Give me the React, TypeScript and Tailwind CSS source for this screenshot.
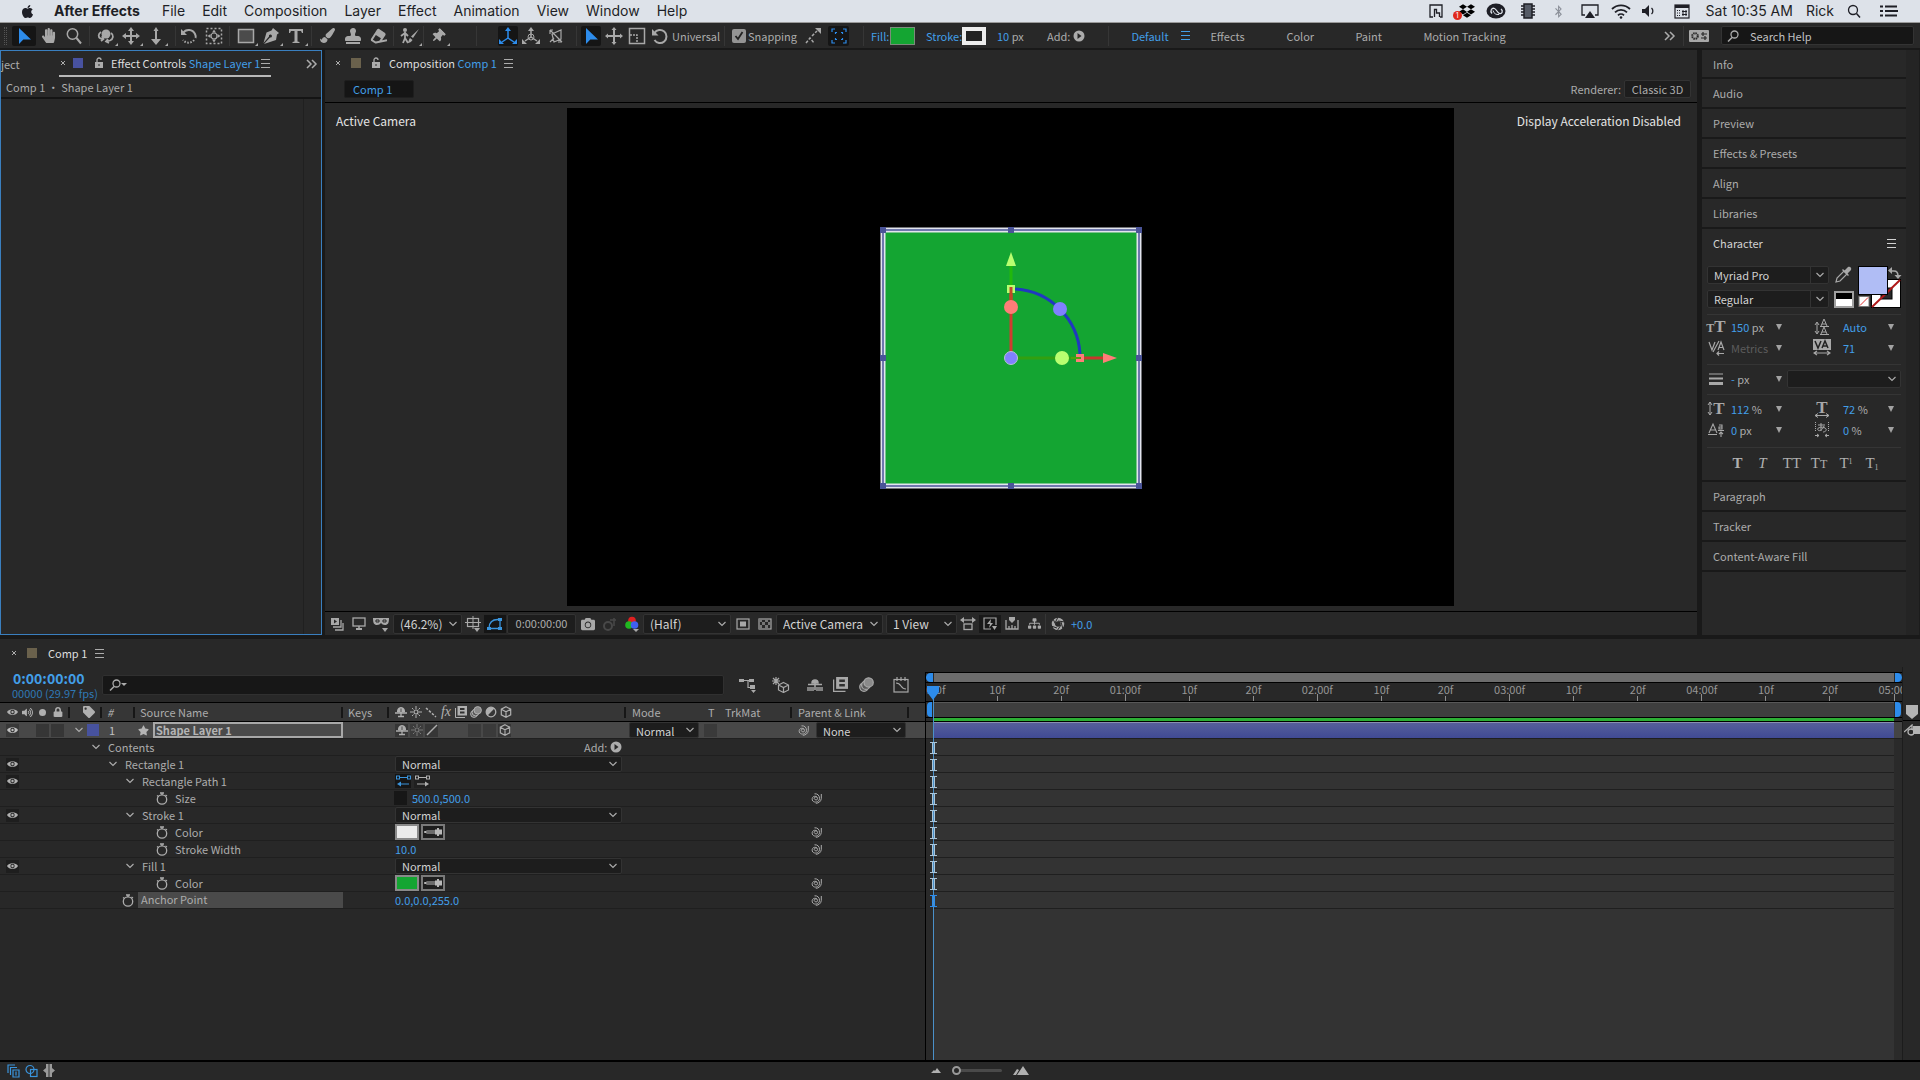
import { useState } from "react";
import type { ReactNode } from "react";
import {
  FaApple, FaBluetoothB, FaCamera, FaDropbox, FaEraser, FaHandPaper, FaLock, FaPaintBrush,
  FaSitemap, FaStamp, FaStar, FaTag, FaThumbtack, FaVolumeUp,
} from "react-icons/fa";

/* ---------- drawing helpers ---------- */

type IcProps = { w?: number; h?: number; className?: string; children: ReactNode };

function Ic({ w = 18, h = 18, className = "", children }: IcProps) {
  return (
    <svg width={w} height={h} viewBox={`0 0 ${w} ${h}`} className={`shrink-0 ${className}`} fill="none" stroke="currentColor" strokeWidth="1.5" aria-hidden="true">
      {children}
    </svg>
  );
}

const F = { fill: "currentColor", stroke: "none" } as const;

const Arrow = () => <Ic><path {...F} d="M4 1v16l4.300-4.500H16z" /></Ic>;
const Zoom = () => <Ic><circle cx="7.500" cy="7" r="5.200" /><path d="M11.500 11l4.500 5.500" strokeWidth="2" /></Ic>;
const Orbit = () => (
  <Ic><circle cx="9" cy="7" r="4.500" {...F} /><path d="M4 5C1 7 1 10 3.500 11.500L6 12M4 14l2.500-2L5 9M14 6c3 2 2.500 6-1 7.500l-4 1M12 16l-3-1.500 2-2.500" strokeWidth="1.800" /></Ic>
);
const PanCross = () => (
  <Ic><path d="M9 3v12M3 9h12" strokeWidth="2" /><path {...F} d="M9 0l3 4H6zM9 18l3-4H6zM0 9l4-3v6zM18 9l-4-3v6z" /></Ic>
);
const Dolly = () => <Ic><path d="M9 4v9" strokeWidth="2" /><path {...F} d="M9 0l2.500 4h-5zM9 18l5-6H4z" /></Ic>;
const Rotate = () => <Ic><path d="M3 6a7 7 0 0 1 12 1c1 2 1 3 .500 4" strokeWidth="2" /><path d="M14 13a7 7 0 0 1-11 0" strokeWidth="2" strokeDasharray="1.500 1.500" /><path {...F} d="M1 2v6h6z" /></Ic>;
const RotateSolid = () => <Ic><path d="M3.500 6a6.500 6.500 0 1 1 0 7" strokeWidth="2" /><path {...F} d="M1 2v6.500h6.500z" /></Ic>;
const AnchorTool = () => (
  <Ic><rect x="1.500" y="1.500" width="15" height="15" strokeDasharray="2 2" /><circle cx="9" cy="9" r="3" strokeWidth="1.200" /><path {...F} d="M9 2.500l2 3H7zM9 15.500l2-3H7zM2.500 9l3-2v4zM15.500 9l-3-2v4z" /></Ic>
);
const RectTool = () => <Ic><rect x="1.500" y="2.500" width="15" height="13" fill="#4b4b4b" /></Ic>;
const Pen = () => <Ic><path {...F} d="M11 1l6 5-2 1.500-1 5.500L2 17l6-6.500a1.500 1.500 0 1 0-1-1L1.500 16 4.500 5.500 9.500 3.500z" /></Ic>;
const TypeTool = () => <Ic><path {...F} d="M2 2h14v4h-1l-1-2h-3.500v10.500l2 .5v1h-7v-1l2-.5V4H4L3 6H2z" /></Ic>;
const Roto = () => (
  <Ic w={20}><circle cx="5" cy="3" r="2" {...F} /><path d="M5 5v6l-2 5M5 11l3 5M1 9l4-3 3 3" strokeWidth="1.800" /><path {...F} d="M19 2l-6 9-2-1.500zM10 11l2.500 2c-1 2-3 3-5 3 1-1 1.500-4 2.500-5z" /></Ic>
);
const AxisLocal = () => <Ic><path d="M9 3v8M9 11l-6 4M9 11l6 4" /><path {...F} d="M9 0l3 4H6zM0 17v-5l5 5zM18 17v-5l-5 5z" /></Ic>;
const AxisWorld = () => <Ic><circle cx="9" cy="10" r="3" strokeWidth="1" /><path d="M9 3v7M9 10l-6 4M9 10l6 4" /><path {...F} d="M9 0l3 4H6zM0 17v-5l5 5zM18 17v-5l-5 5z" /></Ic>;
const AxisView = () => <Ic><path d="M3 3l12 12M5 7l9-4v9l-7 3zM3 3l3 0M3 3v4M15 15h-4M3 15l4-4" strokeWidth="1.200" /></Ic>;
const MovePlus = () => <Ic><path d="M9 2v14M2 9h14" strokeWidth="2" /><path {...F} d="M9 0l2.500 3h-5zM9 18l2.500-3h-5zM0 9l3-2.500v5zM18 9l-3-2.500v5z" /></Ic>;
const ScaleTool = () => <Ic><rect x="1.500" y="1.500" width="15" height="15" /><path d="M2 8h7v8" strokeDasharray="2 1" /></Ic>;
const SnapA = () => <Ic><path d="M2 16l4-5 4 5M8 9l5-5" strokeDasharray="3 1.500" /><path {...F} d="M11 1h6v6z" /></Ic>;
const SnapB = () => <Ic><path d="M2 5V2h3M13 2h3v3M16 13v3h-3M5 16H2v-3M5.500 7V5.500H7M12.500 7V5.500H11M5.500 11v1.500H7M12.500 11v1.500H11" strokeWidth="1.200" /></Ic>;
const PlayCircle = () => <Ic w={12} h={12}><circle cx="6" cy="6" r="5.500" {...F} /><path d="M4.500 3l4 3-4 3z" fill="#282828" stroke="none" /></Ic>;
const Burger = () => <Ic w={10} h={9}><path d="M0 .500h9M0 4.500h9M0 8.500h9" strokeWidth="1" /></Ic>;
const DoubleChevron = () => <Ic w={12} h={10}><path d="M1 1l4 4-4 4M6 1l4 4-4 4" /></Ic>;
const Chevron = ({ className = "" }: { className?: string }) => <Ic w={8} h={6} className={className}><path d="M.5 1L4 4.500 7.500 1" strokeWidth="1.200" /></Ic>;
const Tri = () => <Ic w={6} h={8}><path {...F} d="M0 1h6L3 7z" /></Ic>;
const Cross = () => <Ic w={6} h={6}><path d="M1 1l4 4M5 1L1 5" strokeWidth="1" /></Ic>;
const OpenLock = () => <Ic w={10} h={12}><rect x="1" y="5" width="8" height="6" {...F} /><path d="M3 5V3a2 2 0 0 1 4 0" strokeWidth="1.300" /><rect x="4.500" y="7" width="1" height="2" fill="#282828" stroke="none" /></Ic>;
const Lens = () => <Ic w={12} h={12}><circle cx="7.500" cy="4.500" r="3.500" strokeWidth="1.300" /><path d="M5 7.500l-4 4" strokeWidth="1.500" /></Ic>;
const Eye = () => <Ic w={11} h={8}><path {...F} d="M0 4C2 .200 9 .200 11 4 9 7.800 2 7.800 0 4z" /><circle cx="5.500" cy="4" r="2.200" fill="#2a2a2a" stroke="none" /><circle cx="5.500" cy="4" r="1.200" {...F} /></Ic>;
const Shy = () => <Ic w={12} h={12}><path d="M2.500 6V5a3.500 3.500 0 0 1 7 0v1z" fill="currentColor" strokeWidth="1" /><path d="M0 7h12M6 4v7M3 10.500h6" strokeWidth="1.300" /><path d="M6 2.500v3.500" stroke="#333" strokeWidth=".8" /></Ic>;
const Sun = () => <Ic w={12} h={12}><circle cx="6" cy="6" r="2" strokeWidth="1.200" /><path d="M6 0v3M6 9v3M0 6h3M9 6h3M2 2l1.500 1.500M8.500 8.500L10 10M10 2L8.500 3.500M3.500 8.500L2 10" strokeWidth="1" /></Ic>;
const QualityDots = () => <Ic w={12} h={12}><path d="M1 2l10 9" strokeDasharray="2.500 1.500" /></Ic>;
const Slash = () => <Ic w={12} h={12}><path d="M1 11L11 1" /></Ic>;
const Film = ({ s = 12, className = "" }: { s?: number; className?: string }) => (
  <svg width={s} height={s} viewBox="0 0 12 12" className={`shrink-0 ${className}`} aria-hidden="true" fill="currentColor"><path d="M2.500 0H12v9.500H2.500z" /><path d="M.5 2v9.500H10" fill="none" stroke="currentColor" /><path d="M5 2h4.500v2H5zM5 5.500h4.500v2H5z" fill="#303030" /></svg>
);
const Blur = ({ s = 12, className = "" }: { s?: number; className?: string }) => (
  <svg width={s} height={s} viewBox="0 0 12 12" className={`shrink-0 ${className}`} aria-hidden="true" fill="#5a5a5a" stroke="currentColor"><circle cx="4" cy="8" r="3.400" /><circle cx="5.500" cy="6.500" r="3.400" /><circle cx="7.700" cy="4.300" r="3.700" fill="#8a8a8a" /></svg>
);
const Adjust = () => <Ic w={12} h={12}><circle cx="6" cy="6" r="4.800" strokeWidth="1.300" /><path {...F} d="M9.400 2.600A4.800 4.800 0 0 0 2.600 9.400z" /></Ic>;
const Cube = () => <Ic w={12} h={12}><path d="M6 .700l4.700 2.500v5.600L6 11.300 1.300 8.800V3.200zM1.300 3.200L6 5.800l4.700-2.600M6 5.800v5.500" strokeWidth="1.200" /></Ic>;
const Whip = () => <Ic w={12} h={12}><path d="M7.300 5.500a1.600 1.600 0 1 0 .2 1.200c.300-2.500-4.500-3.800-5.300-.200-.800 4.500 6.800 5 7.300.200C9.700 3.500 7.500 1.500 4.500 1.800M11.300 2v4.500c-.300 3-2.800 4.800-5.500 4.800" strokeWidth="1" /></Ic>;
const Stopwatch = () => <Ic w={12} h={13}><circle cx="6" cy="7.500" r="4.700" strokeWidth="1.300" /><path d="M4 1h4M6 1v2M9.500 3l1.500 1M1 3.500l1.500 1" strokeWidth="1.300" /></Ic>;
const Beam = () => <Ic w={7} h={12}><path d="M0 .500h7M0 11.500h7M2.500 1v10M4.500 1v10" strokeWidth="1" /></Ic>;

/* ---------- controls ---------- */

function Drop({ label, value, className, split = false }: { label: string; value: string; className: string; split?: boolean }) {
  return (
    <div className={`relative shrink-0 ${className}`}>
      <select aria-label={label} defaultValue={value} className="block h-full w-full appearance-none rounded-[2px] border border-[#333] bg-[#1d1d1d] pl-[6px] text-[#d2d2d2] outline-none">
        <option value={value}>{value}</option>
      </select>
      <span className={`pointer-events-none absolute inset-y-0 right-0 flex items-center pl-[5px] pr-[5px] text-[#aaa] ${split ? "border-l border-[#333]" : ""}`}><Chevron /></span>
    </div>
  );
}

function Tool({ label, active = false, more = false, className = "w-[25px]", children }: { label: string; active?: boolean; more?: boolean; className?: string; children: ReactNode }) {
  return (
    <button aria-label={label} className={`relative flex h-[20px] shrink-0 items-center justify-center ${active ? "rounded-[2px] bg-[#151515] text-[#2d8ceb]" : "text-[#a8a8a8]"} ${className}`}>
      {children}
      {more && <Ic w={3} h={3} className="absolute bottom-0 right-0"><path {...F} d="M3 0v3H0z" /></Ic>}
    </button>
  );
}

const Sep = ({ className = "" }: { className?: string }) => <span className={`h-[20px] w-px shrink-0 bg-[#363636] ${className}`} />;

/* ---------- system menu bar ---------- */

function MenuBar() {
  return (
    <header className="flex h-[23px] shrink-0 items-center border-b border-[#9a9a9a] bg-[#dde2e9] pl-[20px] pr-[22px] font-['Inter',sans-serif] text-[14px] text-[#1e1f26]">
      <FaApple size={15} className="mr-[19px]" />
      <nav className="flex items-center gap-[17px]">
        <button className="mr-[5px] font-bold">After Effects</button>
        {["File", "Edit", "Composition", "Layer", "Effect", "Animation", "View", "Window", "Help"].map((m) => <button key={m}>{m}</button>)}
      </nav>
      <div className="ml-auto flex items-center">
        <Ic w={14} h={14} className="mr-[16px]"><path d="M4 13H1V1h12v12h-2M5.500 13V5.500h2V9h3v4" strokeWidth="1.300" /></Ic>
        <span className="relative mr-[11px]"><FaDropbox size={16} className="text-black" /><span className="absolute -left-1.5 top-2 flex h-[9px] w-[9px] items-center justify-center rounded-full bg-[#e0281c] text-[7px] text-white">1</span></span>
        <Ic w={20} h={16} className="mr-[15px]"><ellipse cx="10" cy="8" rx="9.500" ry="7.500" {...F} /><path d="M6 10.500c-2.500-3 0-6 2.500-5 2 .800 3 4.500 5 5 2.500.500 4-2.500 1.500-4.500" stroke="#dde2e9" strokeWidth="1.300" /><path d="M7 7.500c.500 3 3.500 4.500 6 4" stroke="#dde2e9" strokeWidth="1" /></Ic>
        <Ic w={14} h={16} className="mr-[17px]"><rect x="3" y="1" width="8" height="14" fill="#555b66" /><path d="M0 3h3M0 6h3M0 9h3M0 12h3M11 3h3M11 6h3M11 9h3M11 12h3" /></Ic>
        <FaBluetoothB size={13} className="mr-[16px] text-[#8a8f98]" />
        <Ic w={18} h={15} className="mr-[12px]"><path d="M4 11H1V1h16v10h-3" strokeWidth="1.300" /><path {...F} d="M9 7l5 7H4z" /></Ic>
        <Ic w={20} h={15} className="mr-[10px]"><path d="M1 5a13 13 0 0 1 18 0M4 8.300a8.500 8.500 0 0 1 12 0M7 11.300a4.300 4.300 0 0 1 6 0" strokeWidth="1.800" /><circle cx="10" cy="13.500" r="1.300" {...F} /></Ic>
        <Ic w={14} h={14} className="mr-[19px]"><path {...F} d="M1 5h3l4-4v12L4 9H1z" /><path d="M10.500 4a4 4 0 0 1 0 6" strokeWidth="1.300" /></Ic>
        <Ic w={16} h={15} className="mr-[16px]"><rect x="1" y="1" width="14" height="13" strokeWidth="1.200" /><path {...F} d="M1 1h14v3H1z" /><path d="M3 6.500h3M3 9h3M3 11.500h3" strokeWidth="1" strokeDasharray="1 1" /><path d="M9 6v6M12 6v6M8 7.500h5M8 10.500h5" strokeWidth="1" /></Ic>
        <span className="mr-[13px]">Sat 10:35 AM</span>
        <span className="mr-[13px]">Rick</span>
        <Ic w={14} h={14} className="mr-[19px]"><circle cx="6" cy="6" r="4.500" strokeWidth="1.300" /><path d="M9.500 9.500L13 13.500" strokeWidth="1.500" /></Ic>
        <Ic w={18} h={12}><path d="M5 1.500h12M5 6h13M5 10.500h12M0 1.500h3M0 6h3M0 10.500h3" strokeWidth="2" /></Ic>
      </div>
    </header>
  );
}

/* ---------- tool bar ---------- */

function ToolBar() {
  const [snap, setSnap] = useState(true);
  return (
    <div className="flex h-[27px] shrink-0 items-center border-b-2 border-[#191919] bg-[#282828] pl-[4px] pr-[6px] text-[#acacac]">
      <span className="mr-[5px] h-[18px] w-[3px] shrink-0 border-x border-dotted border-[#555]" />
      <Tool label="Selection" active className="w-[24px]"><Arrow /></Tool>
      <Tool label="Hand"><FaHandPaper size={15} /></Tool>
      <Tool label="Zoom"><Zoom /></Tool>
      <Sep className="ml-[3px] mr-[3px]" />
      <Tool label="Orbit" more><Orbit /></Tool>
      <Tool label="Pan" more><PanCross /></Tool>
      <Tool label="Dolly" more><Dolly /></Tool>
      <Sep className="ml-[7px]" />
      <Tool label="Rotate"><Rotate /></Tool>
      <Tool label="Anchor"><AnchorTool /></Tool>
      <Sep className="ml-[3px] mr-[3px]" />
      <Tool label="Rectangle" more><RectTool /></Tool>
      <Tool label="Pen" more><Pen /></Tool>
      <Tool label="Type" more><TypeTool /></Tool>
      <Sep className="ml-[3px] mr-[3px]" />
      <Tool label="Brush"><FaPaintBrush size={15} /></Tool>
      <Tool label="Clone stamp"><FaStamp size={16} /></Tool>
      <Tool label="Eraser"><FaEraser size={16} className="-rotate-12" /></Tool>
      <Sep className="ml-[3px] mr-[3px]" />
      <Tool label="Roto brush" more><Roto /></Tool>
      <Sep className="ml-px mr-px" />
      <Tool label="Puppet pin" more><FaThumbtack size={14} className="rotate-45" /></Tool>
      <Sep className="ml-[26px] mr-[21px]" />
      <Tool label="Local axis" active className="w-[20px]"><AxisLocal /></Tool>
      <Tool label="World axis"><AxisWorld /></Tool>
      <Tool label="View axis"><AxisView /></Tool>
      <Sep className="ml-[8px] mr-[4px]" />
      <Tool label="Select gizmo" active className="w-[20px]"><Arrow /></Tool>
      <Tool label="Position gizmo"><MovePlus /></Tool>
      <Tool label="Scale gizmo" className="w-[22px]"><ScaleTool /></Tool>
      <Tool label="Rotation gizmo" className="w-[24px]"><RotateSolid /></Tool>
      <span className="w-[52px] shrink-0">Universal</span>
      <Sep className="mr-[7px]" />
      <label className="flex w-[70px] shrink-0 items-center gap-[2px]">
        <input type="checkbox" checked={snap} onChange={(e) => setSnap(e.target.checked)} className="peer sr-only" />
        <span className="flex h-[14px] w-[14px] shrink-0 items-center justify-center rounded-[2px] bg-[#949494]"><Ic w={10} h={10}>{snap && <path d="M1.500 5L4 8l4.500-7" stroke="#222" strokeWidth="1.800" />}</Ic></span>
        Snapping
      </label>
      <Tool label="Snap edges" className="w-[22px]"><SnapA /></Tool>
      <Tool label="Snap features" active className="ml-[4px] w-[21px]"><SnapB /></Tool>
      <Sep className="ml-[14px] mr-[7px]" />
      <button className="w-[19px] shrink-0 text-left text-[#429fe8]">Fill:</button>
      <button aria-label="Fill colour" className="mr-[11px] h-[18px] w-[25px] shrink-0 border border-[#7b8b7b] bg-[#14a532]" />
      <button className="w-[36px] shrink-0 text-left text-[#429fe8]">Stroke:</button>
      <button aria-label="Stroke colour" className="mr-[11px] h-[18px] w-[24px] shrink-0 border-4 border-[#ececec] bg-[#222]" />
      <span className="mr-[20px] w-[30px] shrink-0"><span className="text-[#429fe8]">10</span> px</span>
      <button className="flex shrink-0 items-center gap-[3px]">Add: <PlayCircle /></button>
      <Sep className="ml-[23px]" />
      <nav className="ml-[22px] flex shrink-0 items-center">
        <button className="flex w-[79px] items-center gap-[12px] text-[#429fe8]">Default <Burger /></button>
        <button className="w-[76px] text-left">Effects</button>
        <button className="w-[69px] text-left">Color</button>
        <button className="w-[68px] text-left">Paint</button>
        <button>Motion Tracking</button>
      </nav>
      <button aria-label="More workspaces" className="ml-auto shrink-0"><DoubleChevron /></button>
      <Sep className="ml-[7px] mr-[5px]" />
      <button aria-label="Workspace settings" className="mr-[12px] shrink-0 text-[#a8a8a8]">
        <Ic w={20} h={12}><rect width="20" height="12" rx="1" {...F} /><circle cx="6" cy="6" r="2.800" stroke="#282828" strokeDasharray="1.500 .700" strokeWidth="2" /><path d="M12 4h6M12 8h6M14 2v4M16 6v4" stroke="#282828" strokeWidth="1.200" /></Ic>
      </button>
      <label className="flex h-[19px] w-[193px] shrink-0 items-center gap-[11px] rounded-[2px] border border-[#333] bg-[#161616] pl-[5px]">
        <Lens />
        <input aria-label="Search Help" placeholder="Search Help" className="w-[140px] bg-transparent outline-none placeholder:text-[#c0c0c0]" />
      </label>
    </div>
  );
}

/* ---------- effect controls ---------- */

function EffectControls() {
  return (
    <section className="flex w-[322px] shrink-0 flex-col border border-[#3a7fbf] bg-[#282828] text-[#acacac]">
      <div className="flex h-[26px] items-center pr-[3px]">
        <button className="w-[58px] shrink-0 text-left">ject</button>
        <div className="flex h-full w-[212px] shrink-0 items-center border-b-2 border-[#b8b8b8] pl-px">
          <Cross />
          <span className="ml-[7px] mr-[11px] h-[10px] w-[10px] shrink-0 bg-[#4852a0]" />
          <OpenLock />
          <span className="ml-[7px] flex-1 whitespace-nowrap text-[#dedede]">Effect Controls <span className="text-[#429fe8]">Shape Layer 1</span></span>
          <Burger />
        </div>
        <button aria-label="More panels" className="ml-auto"><DoubleChevron /></button>
      </div>
      <div className="h-[22px] border-b-2 border-[#141414] pl-[5px] leading-[21px]">Comp 1 • Shape Layer 1</div>
      <div className="mr-[17px] flex-1 border-r border-[#202020]" />
    </section>
  );
}

/* ---------- composition viewer ---------- */

const handles: [number, number][] = [[316, 122], [444, 122], [572, 122], [316, 250], [572, 250], [316, 378], [444, 378], [572, 378]];

function Stage() {
  return (
    <svg width="887" height="498" viewBox="0 0 887 498" className="shrink-0 bg-black" role="img" aria-label="Composition canvas">
      <rect x="316" y="122" width="256" height="256" fill="#14a532" stroke="#e2e4ee" strokeWidth="5" />
      <rect x="316" y="122" width="256" height="256" fill="none" stroke="#4a5498" strokeWidth="1.500" />
      {handles.map(([x, y]) => <rect key={`${x}-${y}`} x={x - 3} y={y - 3} width="6" height="6" fill="#4a5498" />)}
      <path d="M444 158v20" stroke="#22b80c" strokeWidth="3" />
      <path d="M444 144l5 14h-10z" fill="#b8ff70" />
      <path d="M448 181a69 69 0 0 1 65 65" fill="none" stroke="#2038c0" strokeWidth="3" />
      <path d="M444 248V186" stroke="#d03c30" strokeWidth="3" />
      <rect x="441.500" y="178.500" width="5" height="5" fill="none" stroke="#b8ff70" strokeWidth="3" />
      <path d="M444 179v13" stroke="#c04828" strokeWidth="3" />
      <circle cx="444" cy="199" r="7" fill="#ff7d78" />
      <circle cx="493" cy="201" r="7" fill="#8080ff" />
      <path d="M446 250h68" stroke="#32a010" strokeWidth="3" />
      <path d="M517 250h20" stroke="#c8382c" strokeWidth="3" />
      <path d="M536 245l14 5-14 5z" fill="#ff7d78" />
      <rect x="510.500" y="247.500" width="5" height="5" fill="none" stroke="#ff7d78" strokeWidth="3" />
      <path d="M504 250h10" stroke="#50a010" strokeWidth="2" />
      <circle cx="495" cy="250" r="7" fill="#b8ff70" />
      <circle cx="444" cy="250" r="6.500" fill="#8080ff" stroke="#b8c0d8" />
    </svg>
  );
}

function FootIcon({ label, tone = "text-[#a8a8a8]", children }: { label: string; tone?: string; children: ReactNode }) {
  return <button aria-label={label} className={`flex h-[18px] w-[22px] shrink-0 items-center justify-center ${tone}`}>{children}</button>;
}

function Composition() {
  return (
    <section className="flex min-w-0 flex-1 flex-col bg-[#282828] text-[#acacac]">
      <div className="flex h-[26px] items-center pl-[10px]">
        <Cross />
        <span className="ml-[10px] mr-[10px] h-[10px] w-[10px] bg-[#6a614c]" />
        <OpenLock />
        <span className="ml-[8px] mr-[7px] text-[#dedede]">Composition <span className="text-[#429fe8]">Comp 1</span></span>
        <Burger />
      </div>
      <div className="flex h-[27px] items-start justify-between border-b border-black pl-[19px] pr-[6px] pt-[4px]">
        <button className="h-[18px] w-[70px] rounded-[2px] border border-[#1e1e1e] bg-[#151515] pl-[8px] text-left leading-[15px] text-[#429fe8]">Comp 1</button>
        <div className="flex items-center gap-[3px]">Renderer: <button className="h-[18px] w-[67px] rounded-[2px] border border-[#333] bg-[#1d1d1d] leading-[15px]">Classic 3D</button></div>
      </div>
      <div className="relative flex justify-center py-[5px] pr-px text-[12px]">
        <span className="absolute left-[11px] top-[10px] text-[#e4e4e4]">Active Camera</span>
        <span className="absolute right-[16px] top-[10px] text-[#e4e4e4]">Display Acceleration Disabled</span>
        <Stage />
      </div>
      <div className="flex h-[24px] items-center border-t border-black pl-px text-[12px]">
        <FootIcon label="Always preview"><Ic w={14} h={14}><rect x="1" y="1" width="8" height="7" {...F} /><path d="M3 10h8V3M5 13h8V6" strokeWidth="1.300" /><path d="M4 2.500l3 2-3 2z" fill="#282828" stroke="none" /></Ic></FootIcon>
        <FootIcon label="Primary viewer"><Ic w={14} h={14}><rect x="1" y="1" width="12" height="8" strokeWidth="1.300" /><path d="M4 12h6" strokeWidth="2" /><path d="M7 9v3" /></Ic></FootIcon>
        <FootIcon label="Mask visibility"><Ic w={16} h={16}><path {...F} d="M0 2h16c0 5-1 7-4 7-2 0-3-1-4-2-1 1-2 2-4 2C1 9 0 7 0 2z" /><path d="M3 4h3v2H3zM10 4h3v2h-3z" stroke="#282828" strokeWidth="1" /><path {...F} d="M9 12h6l-3 4z" /></Ic></FootIcon>
        <Drop label="Magnification" value="(46.2%)" className="ml-px h-[20px] w-[69px]" />
        <FootIcon label="Grid and guides"><Ic w={16} h={16}><rect x="2.500" y="2.500" width="11" height="8" strokeWidth="1.200" /><path d="M8 0v13M0 6.500h16" strokeWidth="1" /><path {...F} d="M9 12h6l-3 4z" /></Ic></FootIcon>
        <FootIcon label="Path visibility" tone="bg-[#151515] text-[#3a94dc]"><Ic w={16} h={14}><path d="M2 11.500C2 5 6 2.500 11 2.500h2v9z" strokeWidth="1.300" /><path {...F} d="M0 10h4v3H0zM11 10h4v3h-4zM11 1h4v3h-4z" /></Ic></FootIcon>
        <button className="mx-px h-[20px] w-[69px] shrink-0 rounded-[2px] border border-[#333] bg-[#1d1d1d] text-[11px] leading-[17px]">0:00:00:00</button>
        <FootIcon label="Snapshot"><FaCamera size={14} /></FootIcon>
        <FootIcon label="Show snapshot" tone="text-[#484848]"><Ic w={16} h={14}><circle cx="6" cy="9" r="4" strokeWidth="2" /><path d="M8 3h6M12 1v8" strokeWidth="1.500" /></Ic></FootIcon>
        <FootIcon label="Channels"><Ic w={14} h={16}><circle cx="7" cy="4.500" r="3.800" fill="#e02020" stroke="none" /><circle cx="4" cy="9" r="3.800" fill="#20b820" stroke="none" /><circle cx="9.500" cy="9" r="3.800" fill="#4060f0" stroke="none" /><path {...F} d="M8 13h6l-3 3z" /></Ic></FootIcon>
        <Drop label="Resolution" value="(Half)" className="h-[20px] w-[88px]" />
        <span className="w-px shrink-0" />
        <FootIcon label="Region of interest"><Ic w={14} h={12}><rect x="1" y="1" width="12" height="10" strokeWidth="1.200" /><rect x="4" y="3.500" width="6" height="5" {...F} /></Ic></FootIcon>
        <FootIcon label="Transparency grid"><Ic w={14} h={12}><rect x="1" y="1" width="12" height="10" strokeWidth="1.200" /><path fill="#777" stroke="none" d="M1 1h3v3H1zM7 1h3v3H7zM4 4h3v3H4zM10 4h3v3h-3zM1 7h3v4H1zM7 7h3v4H7z" /></Ic></FootIcon>
        <Drop label="3D view" value="Active Camera" className="h-[20px] w-[107px]" />
        <Drop label="View layout" value="1 View" className="ml-[3px] h-[20px] w-[71px]" />
        <FootIcon label="Pixel aspect"><Ic w={16} h={14}><path d="M2 3h12" strokeWidth="1.300" /><path {...F} d="M0 3l4-3v6zM16 3l-4-3v6z" /><rect x="4" y="7" width="8" height="5.500" strokeWidth="1.300" /></Ic></FootIcon>
        <FootIcon label="Fast previews" tone="bg-[#191919] text-[#a8a8a8]"><Ic w={15} h={14}><path d="M8 12H1V1h12v7" strokeWidth="1.200" /><path {...F} d="M8 2L4 7h3l-1 4 4-5H7.500zM9 9h5l-2.500 4z" /></Ic></FootIcon>
        <FootIcon label="Timeline"><Ic w={14} h={14}><path d="M1 3v9h12V3M4 12V9M7 12V8M10 12V9" strokeWidth="1.300" /><path {...F} d="M4 0h6v3L7 6 4 3z" /></Ic></FootIcon>
        <FootIcon label="Flowchart"><FaSitemap size={13} /></FootIcon>
        <Sep className="mr-px" />
        <FootIcon label="Reset exposure"><Ic w={14} h={14}><circle cx="7" cy="7" r="4.500" strokeWidth="3.500" /><path d="M7 0L4 6M14 5L7 4M12 12l-2-7M6 14l4-6M0 9l6 2M2 2l3 6" stroke="#282828" strokeWidth="1" /></Ic></FootIcon>
        <button className="ml-[2px] text-[11px] text-[#429fe8]">+0.0</button>
      </div>
    </section>
  );
}

/* ---------- right dock ---------- */

function DockRow({ title, height }: { title: string; height: "h-[29px]" | "h-[30px]" }) {
  return <button className={`flex items-center border-b-2 border-[#191919] pl-[11px] text-left text-[#acacac] ${height}`}>{title}</button>;
}

function Metric({ icon, value, unit, muted = false, wide = false, name }: { icon: ReactNode; value: string; unit?: string; muted?: boolean; wide?: boolean; name: string }) {
  return (
    <div className="flex h-[21px] items-center">
      <span className="flex w-[18px] shrink-0 justify-center text-[#a8a8a8]">{icon}</span>
      <button aria-label={name} className={`w-[45px] shrink-0 whitespace-nowrap text-left ${wide ? "ml-[12px]" : "ml-[6px]"} ${muted ? "text-[#5c5c5c]" : "text-[#429fe8]"}`}>{value}{unit && <span className="text-[#acacac]"> {unit}</span>}</button>
      <span className="text-[#a2a2a2]"><Tri /></span>
    </div>
  );
}

const Serif = ({ children, className = "" }: { children: ReactNode; className?: string }) => <span className={`font-['Liberation_Serif',serif] leading-none ${className}`}>{children}</span>;

function Character() {
  return (
    <div className="border-b-2 border-[#191919] px-[5px] pb-[9px] text-[#a8a8a8]">
      <div className="flex h-[28px] items-center justify-between pl-[6px] pr-[4px] text-[#d2d2d2]">Character <Burger /></div>
      <div className="mt-[9px] flex h-[42px]">
        <div className="flex flex-col gap-[6px]">
          <Drop split label="Font family" value="Myriad Pro" className="h-[18px] w-[122px]" />
          <Drop split label="Font style" value="Regular" className="h-[18px] w-[122px]" />
        </div>
        <div className="ml-[5px] flex w-[20px] flex-col justify-between">
          <Ic w={18} h={18}><path d="M2 16l1-4 7-7 3 3-7 7z" strokeWidth="1.200" /><path {...F} d="M8 4l6 6 1-1-1.500-1.500L17 4c1-2-1-4-3-3l-3.500 3.500L9 3z" /></Ic>
          <button aria-label="Black or white" className="h-[17px] w-[20px] border-2 border-[#a0a0a0] bg-linear-to-b from-black from-50% to-white to-50%" />
        </div>
        <svg width="44" height="42" viewBox="0 0 44 42" className="ml-[4px] shrink-0" role="img" aria-label="Fill and stroke colours">
          <rect x="13.500" y="13.500" width="29" height="28" fill="#fff" stroke="#000" />
          <rect x="23" y="22" width="11" height="11" fill="#282828" stroke="#000" />
          <path d="M14 41L42 14" stroke="#b01818" strokeWidth="2" />
          <rect x=".5" y=".5" width="29" height="28" fill="#b0bdf5" stroke="#000" />
          <rect x="1" y="30.500" width="10" height="10" fill="#fff" stroke="#777" /><path d="M2 39.500l8-8" stroke="#e03030" />
          <path d="M33 5h3q4 0 4 5" fill="none" stroke="#a8a8a8" strokeWidth="1.500" /><path d="M34 1v7l-4-3.500zM36.500 9h7L40 13z" fill="#a8a8a8" />
        </svg>
      </div>
      <div className="mt-[6px] grid grid-cols-[106px_1fr] border-t border-[#353535] py-px">
        <Metric name="Font size" icon={<Serif className="text-[17px] font-bold"><span className="text-[12px]">T</span>T</Serif>} value="150" unit="px" />
        <Metric wide name="Leading" icon={<Ic w={16} h={17}><path d="M3 5v10M1 7l2-3 2 3M1 13l2 3 2-3M7 8l3-7 3 7M8 6h4M7 16l3-7 3 7M8 14h4M6 8.500h9M6 16.500h9" strokeWidth="1" /></Ic>} value="Auto" />
        <Metric name="Kerning" muted icon={<Ic w={17} h={16}><path d="M1 2l3 8 3-8M5 12L11 1M10 10l3-8 3 8M11 7.500h4M9 13.500h7M11 11.500l-2 2 2 2" strokeWidth="1.200" /></Ic>} value="Metrics" />
        <Metric wide name="Tracking" icon={<Ic w={18} h={17}><rect width="18" height="11" {...F} /><path d="M2 2l3 7 3-7M9 9l3-7 3 7M10 7h4" stroke="#222" strokeWidth="1.500" /><path d="M1 14h16M4 12l-3 2 3 2M14 12l3 2-3 2" strokeWidth="1.200" /></Ic>} value="71" />
      </div>
      <div className="mt-[5px] flex items-center justify-between border-t border-[#353535] pt-[3px]">
        <Metric name="Stroke width" icon={<Ic w={14} h={12}><path d="M0 1h14" strokeWidth="1" /><path d="M0 5.500h14" strokeWidth="2" /><path d="M0 10.500h14" strokeWidth="3" /></Ic>} value="-" unit="px" />
        <Drop label="Stroke style" value="" className="h-[18px] w-[114px]" />
      </div>
      <div className="mt-[5px] grid grid-cols-[106px_1fr] border-t border-[#353535] pb-px pt-[3px]">
        <Metric name="Vertical scale" icon={<span className="flex items-center"><Ic w={6} h={15}><path d="M3 1v13M1 4l2-3 2 3M1 11l2 3 2-3" strokeWidth="1" /></Ic><Serif className="text-[17px] font-bold">T</Serif></span>} value="112" unit="%" />
        <Metric wide name="Horizontal scale" icon={<span className="flex flex-col items-center"><Serif className="text-[17px] font-bold">T</Serif><Ic w={16} h={5} className="-mt-[3px]"><path d="M1 2.500h14M4 .500l-3 2 3 2M12 .500l3 2-3 2" strokeWidth="1" /></Ic></span>} value="72" unit="%" />
        <Metric name="Baseline shift" icon={<Ic w={17} h={15}><path d="M1 11l4-9 4 9M2.500 8h5M0 12.500h9M11 3h3v4h-3V5h3M10 8.500h6M13 10v5M11 12l2-2 2 2" strokeWidth="1.100" /></Ic>} value="0" unit="px" />
        <Metric wide name="Tsume" icon={<Ic w={16} h={16}><path d="M1.500 0v10M14.500 0v10" strokeWidth="1" strokeDasharray="1 1" /><path d="M4 3h7M7 1v8M10 4c-1 3-4 6-6 4s4-4 7-2 0 4-2 4M1 13.500h4M3 12l2 1.500L3 15M15 13.500h-4M13 12l-2 1.500 2 1.500" strokeWidth="1" /></Ic>} value="0" unit="%" />
      </div>
      <div className="mt-[6px] flex h-[24px] items-end border-t border-[#353535] pl-[18px] text-[#b0b0b0]">
        <button className="w-[25px]"><Serif className="text-[15px] font-bold">T</Serif></button>
        <button className="w-[25px]"><Serif className="text-[15px] italic">T</Serif></button>
        <button className="ml-[3px] w-[28px]"><Serif className="text-[15px]">TT</Serif></button>
        <button className="w-[26px]"><Serif className="text-[15px]">T<span className="text-[12px]">T</span></Serif></button>
        <button className="w-[28px]"><Serif className="text-[15px]">T<sup className="text-[8px]">1</sup></Serif></button>
        <button className="w-[24px]"><Serif className="text-[15px]">T<sub className="text-[8px]">1</sub></Serif></button>
      </div>
    </div>
  );
}

function Dock() {
  return (
    <aside className="flex w-[218px] shrink-0 border-r border-[#1c1c1c] bg-[#242424]">
      <div className="flex w-[204px] flex-col bg-[#282828]">
        {["Info", "Audio", "Preview", "Effects & Presets", "Align", "Libraries"].map((t, i) => <DockRow key={t} title={t} height={i === 0 ? "h-[29px]" : "h-[30px]"} />)}
        <Character />
        {["Paragraph", "Tracker", "Content-Aware Fill"].map((t) => <DockRow key={t} title={t} height="h-[30px]" />)}
      </div>
    </aside>
  );
}

/* ---------- timeline: layer table ---------- */

type Row = {
  name: string; depth: "pl-[22px]" | "pl-[39px]" | "pl-[56px]" | "pl-[86px]" | "pl-[52px]";
  eye?: boolean; group?: boolean; whip?: boolean;
  control: "add" | "mode" | "dir" | "size" | "white" | "green" | "text"; text?: string;
};

const rows: Row[] = [
  { name: "Contents", depth: "pl-[22px]", group: true, control: "add" },
  { name: "Rectangle 1", depth: "pl-[39px]", eye: true, group: true, control: "mode" },
  { name: "Rectangle Path 1", depth: "pl-[56px]", eye: true, group: true, control: "dir" },
  { name: "Size", depth: "pl-[86px]", whip: true, control: "size" },
  { name: "Stroke 1", depth: "pl-[56px]", eye: true, group: true, control: "mode" },
  { name: "Color", depth: "pl-[86px]", whip: true, control: "white" },
  { name: "Stroke Width", depth: "pl-[86px]", whip: true, control: "text", text: "10.0" },
  { name: "Fill 1", depth: "pl-[56px]", eye: true, group: true, control: "mode" },
  { name: "Color", depth: "pl-[86px]", whip: true, control: "green" },
  { name: "Anchor Point", depth: "pl-[52px]", whip: true, control: "text", text: "0.0,0.0,255.0" },
];

const PathDir = ({ flip = false }: { flip?: boolean }) => (
  <Ic w={15} h={12}><path d="M3 2.500h9" strokeWidth="1" /><rect x=".5" y="1" width="3" height="3" strokeWidth="1" /><rect x="11.500" y="1" width="3" height="3" strokeWidth="1" /><path d={flip ? "M2 9h9" : "M4 9h9"} strokeWidth="1" /><path {...F} d={flip ? "M10 6.500l4 2.500-4 2.500z" : "M5 6.500L1 9l4 2.500z"} /></Ic>
);

function Control({ row }: { row: Row }) {
  switch (row.control) {
    case "add":
      return <button className="ml-[195px] flex items-center gap-[3px]">Add: <PlayCircle /></button>;
    case "mode":
      return <Drop label={`${row.name} blend mode`} value="Normal" className="ml-[6px] h-[16px] w-[227px]" />;
    case "dir":
      return (
        <div className="ml-[6px] flex gap-[3px]">
          <button aria-label="Path direction normal" className="flex h-[14px] w-[16px] items-center justify-center bg-[#151515] text-[#3a94dc]"><PathDir /></button>
          <button aria-label="Path direction reversed" className="flex h-[14px] w-[16px] items-center justify-center bg-[#202020] text-[#b0b0b0]"><PathDir flip /></button>
        </div>
      );
    case "size":
      return <div className="ml-[5px] flex items-center gap-[5px]"><button aria-label="Constrain proportions" className="h-[14px] w-[13px] bg-[#171717]" /><button className="text-[#429fe8]">500.0,500.0</button></div>;
    case "white":
    case "green":
      return (
        <div className="ml-[6px] flex gap-[2px]">
          <button aria-label="Colour" className={`h-[16px] w-[24px] border-2 border-[#8a8a8a] ${row.control === "white" ? "bg-[#ebebeb]" : "bg-[#14a532]"}`} />
          <button aria-label="Eyedropper" className="flex h-[16px] w-[24px] items-center justify-center border-2 border-[#7a7a7a] bg-[#1e1e1e] text-[#b8b8b8]"><Ic w={19} h={8}><path {...F} d="M11 1.500h2V0h2v1.500h3v5h-3V8h-2V6.500h-2z" /><path d="M11 3H3L0 4l3 1h8" strokeWidth="1" /></Ic></button>
        </div>
      );
    default:
      return <button className="ml-[6px] text-[#429fe8]">{row.text}</button>;
  }
}

const box = "flex h-[13px] w-[13px] shrink-0 items-center justify-center";
const headSep = "border-r-2 border-[#161616]";

function LayerTable() {
  return (
    <table className="w-full table-fixed border-separate border-spacing-0 text-left text-[#acacac]">
      <colgroup>
        <col className="w-[70px]" /><col className="w-[32px]" /><col className="w-[33px]" /><col className="w-[208px]" />
        <col className="w-[46px]" /><col className="w-[237px]" /><col className="w-[166px]" /><col />
      </colgroup>
      <thead className="bg-[#363636]">
        <tr className="*:h-[20px] *:border-y *:border-black *:p-0 *:font-normal">
          <th><div className={`flex h-[11px] items-center pl-[7px] text-[#b0b0b0] ${headSep}`}><Eye /><FaVolumeUp size={11} className="ml-[4px]" /><span className="ml-[6px] h-[7px] w-[7px] rounded-full bg-current" /><FaLock size={10} className="ml-[7px]" /></div></th>
          <th><div className={`flex h-[11px] items-center justify-end pr-[5px] text-[#b0b0b0] ${headSep}`}><FaTag size={12} /></div></th>
          <th><div className={`h-[11px] pl-[5px] leading-[11px] italic ${headSep}`}>#</div></th>
          <th><div className={`h-[11px] pl-[5px] leading-[11px] ${headSep}`}>Source Name</div></th>
          <th><div className={`h-[11px] pl-[5px] leading-[11px] ${headSep}`}>Keys</div></th>
          <th><div className={`flex h-[11px] items-center gap-[3px] pl-[6px] text-[#b0b0b0] ${headSep}`}><Shy /><Sun /><QualityDots /><span className="w-[12px] text-center font-['Liberation_Serif',serif] text-[14px] italic leading-none">fx</span><Film /><Blur /><Adjust /><Cube /></div></th>
          <th><div className={`flex h-[11px] items-center pl-[6px] ${headSep}`}><span className="w-[76px]">Mode</span><span className="w-[17px]">T</span>TrkMat</div></th>
          <th><div className={`mr-[16px] h-[11px] pl-[6px] leading-[11px] ${headSep}`}>Parent &amp; Link</div></th>
        </tr>
      </thead>
      <tbody>
        <tr className="bg-[#484848] *:h-[17px] *:border-b *:border-[#202020] *:p-0">
          <td><div className="flex items-center pl-[6px]"><span className={`${box} bg-[#383838] text-[#c0c0c0]`}><Eye /></span><span className={`${box} ml-[17px] bg-[#363636]`} /><span className={`${box} ml-[2px] bg-[#363636]`} /></div></td>
          <td><div className="flex items-center gap-[4px] pl-[5px]"><Chevron /><span className="h-[12px] w-[12px] bg-[#47529e]" /></div></td>
          <td><div className="pl-[7px] leading-[15px] text-[#c0c0c0]">1</div></td>
          <td><div className="flex items-center gap-[4px] pl-[3px]"><FaStar size={11} className="text-[#b4b4b4]" /><input aria-label="Layer name" defaultValue="Shape Layer 1" className="h-[16px] min-w-0 flex-1 border-2 border-[#a8a8a8] bg-[#4a4a4a] pl-px font-bold leading-[12px] text-[#b4b4b4] outline-none" /></div></td>
          <td />
          <td><div className="flex items-center gap-[2px] pl-[6px]"><span className={`${box} bg-[#363636]`}><Shy /></span><span className={`${box} bg-[#3c3c3c] text-[#777]`}><Sun /></span><span className={`${box} bg-[#363636]`}><Slash /></span><span className={`${box} ml-[28px] bg-[#3a3a3a]`} /><span className={`${box} bg-[#3a3a3a]`} /><span className={`${box} bg-[#363636]`}><Cube /></span></div></td>
          <td><div className="flex items-center pl-[3px]"><Drop label="Mode" value="Normal" className="h-[16px] w-[70px]" /><span className={`${box} ml-[5px] bg-[#3a3a3a]`} /></div></td>
          <td><div className="flex items-center gap-[7px] pl-[5px]"><Whip /><Drop label="Parent" value="None" className="h-[16px] w-[90px]" /></div></td>
        </tr>
        {rows.map((row, i) => (
          <tr key={i} className="*:h-[17px] *:border-b *:border-[#1f1f1f] *:p-0">
            <td>{row.eye && <div className="flex pl-[6px]"><span className={`${box} bg-[#1e1e1e] text-[#b0b0b0]`}><Eye /></span></div>}</td>
            <td colSpan={3}>
              <div className={`flex h-[16px] items-center ${row.depth}`}>
                {row.group ? <Chevron className="mr-[8px]" /> : <button aria-label={`Animate ${row.name}`} className={row.name === "Anchor Point" ? "mr-[4px]" : "mr-[7px]"}><Stopwatch /></button>}
                <span className={row.name === "Anchor Point" ? "h-[16px] flex-1 bg-[#4a4a4a] pl-[3px] leading-[15px]" : "leading-[15px]"}>{row.name}</span>
              </div>
            </td>
            <td />
            <td><div className="flex h-[16px] items-center leading-[15px]"><Control row={row} /></div></td>
            <td />
            <td>{row.whip && <div className="pl-[18px]"><Whip /></div>}</td>
          </tr>
        ))}
      </tbody>
    </table>
  );
}

/* ---------- timeline: time graph ---------- */

const ticks = Array.from({ length: 16 }, (_, i) => {
  const s = Math.floor(i / 3);
  const label = i === 0 ? "0:00f" : i % 3 === 0 ? `0${s}:00f` : `${(i % 3) * 10}f`;
  return { label, major: i % 3 === 0, pct: (i / 15) * 100 };
});

function TimeGraph() {
  return (
    <div className="relative flex min-w-0 flex-1 flex-col overflow-hidden border-l border-black bg-[#2a2a2a]">
      <div className="flex h-[11px] items-center gap-px border-y border-black">
        <span className="h-full w-[7px] rounded-l-full bg-[#2d8ceb]" />
        <span className="h-full flex-1 bg-[#6c6c6c]" />
        <span className="h-full w-[7px] rounded-r-full bg-[#2d8ceb]" />
      </div>
      <div className="h-[19px] border-b border-black bg-[#282828] pl-[7px] pr-[8px] text-[#969696]">
        <div className="relative h-full">
          {ticks.map((t) => (
            <div key={t.pct} className="absolute inset-y-0 flex w-0 flex-col items-center justify-between" style={{ left: `${t.pct}%` }}>
              <span className="leading-[13px]">{t.label}</span>
              <span className={t.major ? "absolute bottom-0 h-[7px] w-px bg-[#8e8e8e]" : "absolute bottom-0 h-[5px] w-px bg-[#8e8e8e]"} />
            </div>
          ))}
        </div>
      </div>
      <div className="flex h-[16px] gap-px border-b border-black pl-[1px] pr-[1px]">
        <span className="h-full w-[5px] rounded-l-[4px] bg-[#2d8ceb]" />
        <span className="h-full flex-1 border-t border-[#585858] bg-[#3e3e3e]" />
        <span className="h-full w-[6px] rounded-r-[4px] bg-[#2d8ceb]" />
      </div>
      <div className="h-[4px] border-b border-black pl-[7px] pr-[8px]"><div className="h-full bg-[#2cae34]" /></div>
      <div className="h-[17px] border-b border-[#1f1f1f] bg-[#444] pl-[7px] pr-[8px]"><div className="h-full border-t border-[#8890b0] bg-linear-to-b from-[#565e9a] to-[#404a94]" /></div>
      <div className="flex flex-1 flex-col pl-[7px] pr-[8px]">
        <div className="flex-1 bg-[#333]">
          {rows.map((r, i) => <div key={i} className="h-[17px] border-b border-[#1f1f1f]" />)}
        </div>
      </div>
      <div className="absolute bottom-0 left-[7px] top-[20px] w-px bg-[#4a90c8]" />
      <div className="absolute left-[4px] top-[67px] flex flex-col">
        {rows.map((r, i) => <span key={i} className={`flex h-[17px] items-center ${i === rows.length - 1 ? "text-[#2d8ceb]" : "text-[#a9c4d8]"}`}><Beam /></span>)}
      </div>
      <Ic w={12} h={14} className="absolute left-[1px] top-[14px]"><path d="M0 0h12v6l-6 8-6-8z" fill="#2d8ceb" stroke="none" /></Ic>
    </div>
  );
}

function Timeline() {
  return (
    <section className="flex min-h-0 flex-1 flex-col bg-[#282828] text-[#acacac]">
      <div className="flex h-[28px] shrink-0 items-center pl-[11px]">
        <Cross />
        <span className="ml-[10px] mr-[11px] h-[10px] w-[10px] bg-[#6a614c]" />
        <span className="mr-[8px] text-[#dedede]">Comp 1</span>
        <Burger />
      </div>
      <div className="flex min-h-0 flex-1">
        <div className="flex w-[925px] shrink-0 flex-col">
          <div className="flex h-[35px] shrink-0 items-center">
            <div className="flex w-[102px] shrink-0 flex-col whitespace-nowrap pl-[12px] text-[#429fe8]">
              <span className="pl-px text-[14px] font-bold leading-[16px]">0:00:00:00</span>
              <span className="leading-[14px] text-[#2f78b4]">00000 (29.97 fps)</span>
            </div>
            <label className="flex h-[20px] w-[622px] items-center rounded-[2px] border border-[#303030] bg-[#171717] pl-[6px]">
              <Lens /><Ic w={6} h={4}><path {...F} d="M0 0h6L3 3z" /></Ic>
              <input aria-label="Search layers" className="flex-1 bg-transparent outline-none" />
            </label>
            <div className="flex flex-1 items-center pl-[15px] text-[#a8a8a8]">
              <Ic w={17} h={16}><path d="M1 3.500h9M9 3.500v7h5" strokeWidth="1.200" /><path {...F} d="M0 2h5v3H0zM10 2h5v3h-5zM11 8h5v4h-5zM12 13h5l-2.500 3z" /></Ic>
              <Ic w={18} h={16} className="ml-[16px]"><path d="M11.500 5.500l5 2.500v5l-5 2.500-5-2.500V8zM6.500 8l5 2.500 5-2.500M11.500 10.500v5" strokeWidth="1.200" /><path d="M4 0v8M0 4h8M1 1l6 6M7 1L1 7" strokeWidth="1.200" /></Ic>
              <Ic w={16} h={14} className="ml-[17px]"><path d="M5 5a3 3 0 0 1 6 0z" fill="currentColor" /><path d="M1 6.500h14M8 3v9" strokeWidth="1.500" /><path d="M0 9h7v4H0zM9 9h7v4H9z" fill="#808080" stroke="none" /></Ic>
              <Film s={15} className="ml-[10px]" />
              <Blur s={15} className="ml-[11px]" />
              <Ic w={16} h={16} className="ml-[19px]"><rect x="1" y="2.500" width="14" height="12.500" strokeWidth="1.200" /><path d="M3 6c6 0 4 6 10 6M4 0v4M8 0v4M12 0v4" strokeWidth="1.200" /></Ic>
            </div>
          </div>
          <LayerTable />
        </div>
        <div className="flex min-w-0 flex-1 flex-col pt-[5px]"><TimeGraph /></div>
        <div className="flex w-[18px] shrink-0 flex-col items-center border-l border-[#1c1c1c] pt-[36px] text-[#b4b4b4]">
          <div className="flex h-[18px] w-full items-center justify-center border-b border-black"><Ic w={12} h={14}><path {...F} d="M0 0h12v9l-6 5-6-5z" /></Ic></div>
          <Ic w={16} h={14} className="mt-[3px]"><rect x="9" y="2" width="7" height="8" {...F} /><circle cx="7" cy="8" r="3" strokeWidth="1.300" /><path d="M0 8l8-7v5" strokeWidth="1.300" /></Ic>
        </div>
      </div>
      <footer className="flex h-[20px] shrink-0 items-center border-t-2 border-black pb-px pl-[7px] text-[#3a94dc]">
        <button aria-label="Layer switches" className="w-[18px]"><Ic w={13} h={14}><path d="M1 9V1h7M3.500 11V3.500H10M6 6h6v7H6zM9 7.500v4" strokeWidth="1.200" /></Ic></button>
        <button aria-label="Transfer controls" className="w-[18px]"><Ic w={13} h={14}><circle cx="5" cy="5.500" r="4" strokeWidth="1.200" /><rect x="5.500" y="5.500" width="6.500" height="7" strokeWidth="1.200" /></Ic></button>
        <button aria-label="In and out" className="w-[18px] text-[#9a9a9a]"><Ic w={12} h={13}><path {...F} d="M3 0h6v4l3 2.500L9 9v4H3V9L0 6.500 3 4z" /><path d="M6 0v13" stroke="#555" /></Ic></button>
        <div className="ml-[870px] flex items-center gap-[11px] text-[#b0b0b0]">
          <Ic w={10} h={6}><path {...F} d="M0 5l3-3 1 1 2-3 4 5z" /></Ic>
          <input type="range" aria-label="Timeline zoom" min={0} max={100} defaultValue={0} className="h-[14px] w-[50px] appearance-none bg-transparent outline-none [&::-webkit-slider-runnable-track]:h-[3px] [&::-webkit-slider-runnable-track]:rounded [&::-webkit-slider-runnable-track]:bg-[#4a4a4a] [&::-webkit-slider-thumb]:-mt-[3px] [&::-webkit-slider-thumb]:h-[9px] [&::-webkit-slider-thumb]:w-[9px] [&::-webkit-slider-thumb]:appearance-none [&::-webkit-slider-thumb]:rounded-full [&::-webkit-slider-thumb]:border-2 [&::-webkit-slider-thumb]:border-[#9a9a9a] [&::-webkit-slider-thumb]:bg-[#282828]" />
          <Ic w={16} h={9}><path {...F} d="M0 9l4-6 2 1-3 5zM4 9l6-9 6 9z" /></Ic>
        </div>
      </footer>
    </section>
  );
}

export default function App() {
  return (
    <div className="flex min-h-screen flex-col bg-[#191919] font-['Noto_Sans_CJK_SC',sans-serif] text-[11px] leading-[16px]">
      <MenuBar />
      <ToolBar />
      <main className="flex flex-1 flex-col gap-[4px]">
        <div className="flex">
          <EffectControls />
          <span className="w-[3px] shrink-0" />
          <Composition />
          <span className="w-[5px] shrink-0" />
          <Dock />
        </div>
        <Timeline />
      </main>
    </div>
  );
}
